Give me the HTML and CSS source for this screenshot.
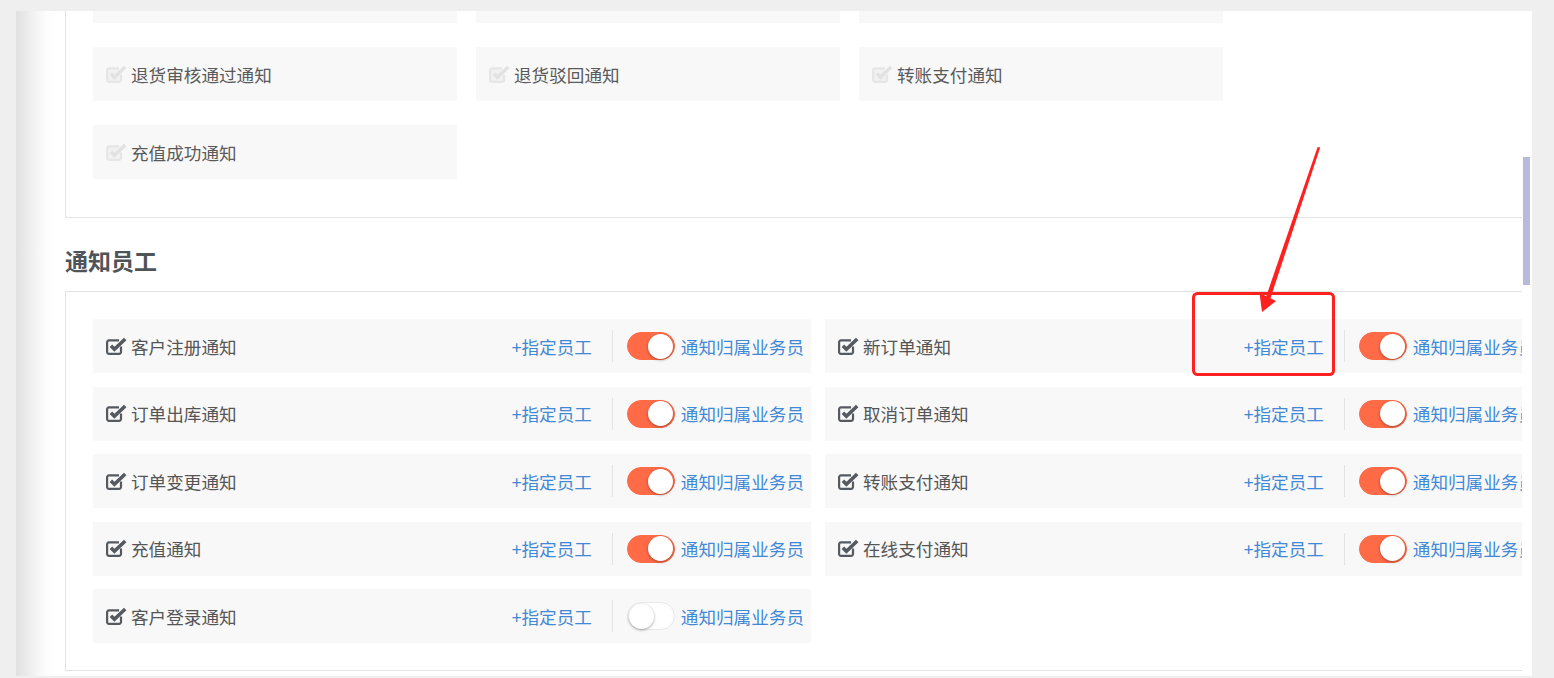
FILE: index.html
```html
<!DOCTYPE html>
<html lang="zh-CN">
<head>
    <meta charset="UTF-8">
    <title>通知设置</title>
    <link rel="stylesheet" href="styles.css">
</head>
<body>
    <div class="page">
        <div class="panel">
            <div class="scroller">
                <div class="content">
                    <!-- 通知客户 (scrolled up, first row out of view) -->
                    <div class="box box-customer">
                        <div class="customer-grid" id="customerGrid">
                            <div class="notice-item"></div>
                            <div class="notice-item"></div>
                            <div class="notice-item"></div>
                        </div>
                    </div>

                    <h3 class="section-title">通知员工</h3>

                    <div class="box box-staff">
                        <div class="staff-grid" id="staffGrid"></div>
                    </div>
                </div>
            </div>
            <div class="scrollbar"><div class="scroll-thumb"></div></div>
        </div>

        <!-- annotation drawn over the screenshot -->
        <svg class="annotation" width="1554" height="678" viewBox="0 0 1554 678">
            <rect x="1193.5" y="293.5" width="140" height="81" rx="4" fill="none" stroke="#ff2020" stroke-width="3"/>
            <polygon points="1317.6,147 1320.2,147.6 1270.2,299 1265.8,297.4" fill="#ff2020"/>
            <polygon points="1262,312 1259.5,293 1276,301" fill="#ff2020"/>
        </svg>
    </div>

    <script>
        function checkIcon(cls) {
            return '<svg class="' + cls + '" width="21" height="19" viewBox="0 0 21 19">' +
                '<path class="cb-box" d="M15 9.5V15a1.8 1.8 0 0 1-1.8 1.8H2.9A1.8 1.8 0 0 1 1.1 15V5.2A1.8 1.8 0 0 1 2.9 3.4H13"/>' +
                '<path class="cb-tick" d="M4.9 8.8l3.5 3.5L19.2 2"/>' +
                '</svg>';
        }

        // customer notices (disabled)
        const customerRows = ['退货审核通过通知', '退货驳回通知', '转账支付通知', '充值成功通知'];
        const cGrid = document.getElementById('customerGrid');
        customerRows.forEach(function(name) {
            const el = document.createElement('div');
            el.className = 'notice-item';
            el.innerHTML = checkIcon('cb-off') + '<span>' + name + '</span>';
            cGrid.appendChild(el);
        });

        // staff notice rows
        const staffRows = [
            { name: '客户注册通知', on: true },
            { name: '新订单通知', on: true },
            { name: '订单出库通知', on: true },
            { name: '取消订单通知', on: true },
            { name: '订单变更通知', on: true },
            { name: '转账支付通知', on: true },
            { name: '充值通知', on: true },
            { name: '在线支付通知', on: true },
            { name: '客户登录通知', on: false }
        ];

        const grid = document.getElementById('staffGrid');
        staffRows.forEach(function(row) {
            const el = document.createElement('div');
            el.className = 'staff-row';
            el.innerHTML =
                checkIcon('cb-on') +
                '<span class="staff-name">' + row.name + '</span>' +
                '<a class="assign-link">+指定员工</a>' +
                '<span class="divider"></span>' +
                '<span class="switch' + (row.on ? ' switch-on' : '') + '"><span class="knob"></span></span>' +
                '<span class="switch-label">通知归属业务员</span>';
            grid.appendChild(el);
        });
    </script>
</body>
</html>
```

FILE: styles.css
```css
* {
    margin: 0;
    padding: 0;
    box-sizing: border-box;
}

body {
    font-family: "Noto Sans CJK SC", "Noto Sans", sans-serif;
    background-color: #efefef;
    color: #555;
    height: 678px;
    overflow: hidden;
}

.page {
    position: relative;
    padding: 11px 22px 0 16px;
}

.panel {
    display: flex;
    height: 665px;
    background: linear-gradient(to right, #e1e1e1 0, #ececec 12px, #f6f6f6 22px, #fcfcfc 30px, #fff 38px);
}

.scroller {
    flex: 1;
    min-width: 0;
    overflow: hidden;
    padding-left: 49px;
}

.content {
    width: 1506px;
    margin-top: -70px;
}

.box {
    border: 1px solid #e3e3e3;
    padding: 27px;
}

.box-customer {
    padding-bottom: 38px;
}

.customer-grid {
    display: grid;
    grid-template-columns: repeat(3, 364px);
    column-gap: 19px;
    row-gap: 24px;
}

.notice-item {
    display: flex;
    align-items: center;
    height: 54px;
    padding-left: 13px;
    background-color: #f8f8f8;
    font-size: 17.6px;
    color: #5a5a5a;
}

.cb-off {
    flex-shrink: 0;
    margin-right: 4px;
}

.cb-off .cb-box {
    fill: #f1f1f1;
    stroke: #e6e6e6;
    stroke-width: 2.2;
}

.cb-off .cb-tick {
    fill: none;
    stroke: #e2e2e2;
    stroke-width: 3.4;
}

.section-title {
    font-size: 23px;
    font-weight: bold;
    line-height: 34px;
    padding: 25px 0 14px;
    color: #4f5459;
}

.box-staff {
    padding-bottom: 27px;
}

.staff-grid {
    display: grid;
    grid-template-columns: repeat(2, 718px);
    column-gap: 14px;
    row-gap: 13.5px;
}

.staff-row {
    display: flex;
    align-items: center;
    height: 54px;
    padding: 0 7px 0 13px;
    background-color: #f8f8f8;
    font-size: 17.6px;
}

.cb-on {
    flex-shrink: 0;
    margin-right: 4px;
}

.cb-on .cb-box {
    fill: none;
    stroke: #545a60;
    stroke-width: 2.2;
}

.cb-on .cb-tick {
    fill: none;
    stroke: #545a60;
    stroke-width: 3.6;
}

.staff-name {
    flex: 1;
    color: #555;
}

.assign-link {
    color: #4189d6;
    cursor: pointer;
}

.divider {
    width: 1px;
    height: 32px;
    margin: 0 14px 0 20px;
    background-color: #e4e4e4;
}

.switch {
    display: flex;
    align-items: center;
    width: 48px;
    height: 28px;
    padding: 0 1px;
    border-radius: 14px;
    border: 1px solid #e8e8e8;
    background-color: #fff;
    margin-right: 6px;
}

.switch-on {
    justify-content: flex-end;
    border-color: #ff6a47;
    background-color: #ff6a47;
}

.knob {
    width: 25px;
    height: 25px;
    border-radius: 50%;
    background-color: #fff;
    box-shadow: 0 1px 3px rgba(0, 0, 0, 0.35);
}

.switch-label {
    color: #4189d6;
    white-space: nowrap;
}

.scrollbar {
    width: 10px;
    padding-left: 1px;
    background-color: #fff;
}

.scroll-thumb {
    width: 7px;
    height: 128px;
    margin-top: 146px;
    background-color: #b9badb;
}

.annotation {
    position: absolute;
    left: 0;
    top: 0;
    pointer-events: none;
}
```
